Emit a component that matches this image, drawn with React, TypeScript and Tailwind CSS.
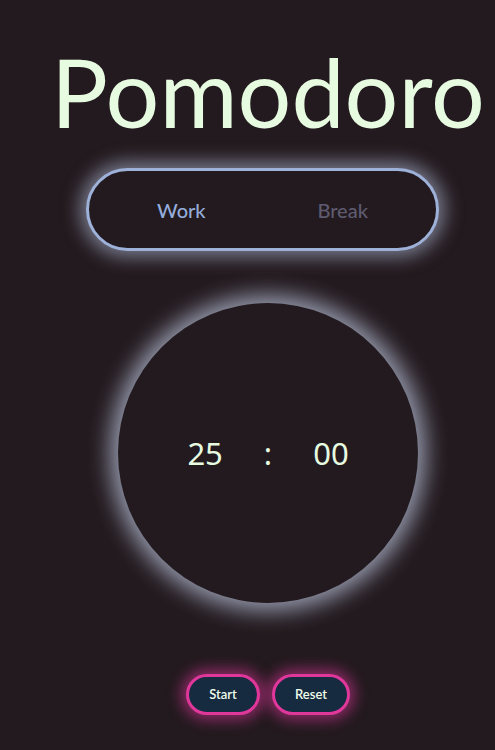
import React from "react";

export default function App() {
  return (
    <div className="w-[495px] h-[750px] overflow-hidden bg-[#231a1f]">
      <div className="flex flex-col items-center pl-[41px]">
        <h1
          className="mt-[36px] h-[110px] text-[#e6fbe0] text-[95px] leading-[110px] whitespace-nowrap"
          style={{ fontFamily: "'Gill Sans', Lato, 'Open Sans', sans-serif" }}
        >
          Pomodoro
        </h1>
        <div
          className="mt-[22px] mr-[11px] w-[353px] h-[83px] rounded-full border-[3px] border-[#9db1d9] bg-[#231a1f] shadow-[0_0_18px_6px_rgba(190,200,230,0.55)] flex items-center justify-between px-[68px] text-[20px]"
          style={{ fontFamily: "Lato, 'Open Sans', sans-serif" }}
        >
          <span className="text-[#93acdb] font-medium">Work</span>
          <span className="text-[#5d5b70] font-medium">Break</span>
        </div>
        <div className="mt-[52px] w-[300px] h-[300px] rounded-full bg-[#231a1f] shadow-[0_0_22px_8px_rgba(200,210,235,0.7)] flex items-center justify-center gap-[41px] text-[#e6fbe0] text-[31px]"
          style={{ fontFamily: "'Noto Sans', 'Open Sans', sans-serif" }}
        >
          <span>25</span>
          <span>:</span>
          <span>00</span>
        </div>
        <div className="mt-[71px] flex gap-[12px]" style={{ fontFamily: "Lato, 'Open Sans', sans-serif" }}>
          <button className="w-[74px] h-[41px] rounded-full border-[3px] border-[#e0379b] bg-[#162a40] text-[#f0fbea] text-[13px] font-semibold shadow-[0_0_14px_5px_rgba(224,55,155,0.55)]">
            Start
          </button>
          <button className="w-[78px] h-[41px] rounded-full border-[3px] border-[#e0379b] bg-[#162a40] text-[#f0fbea] text-[13px] font-semibold shadow-[0_0_14px_5px_rgba(224,55,155,0.55)]">
            Reset
          </button>
        </div>
      </div>
    </div>
  );
}
